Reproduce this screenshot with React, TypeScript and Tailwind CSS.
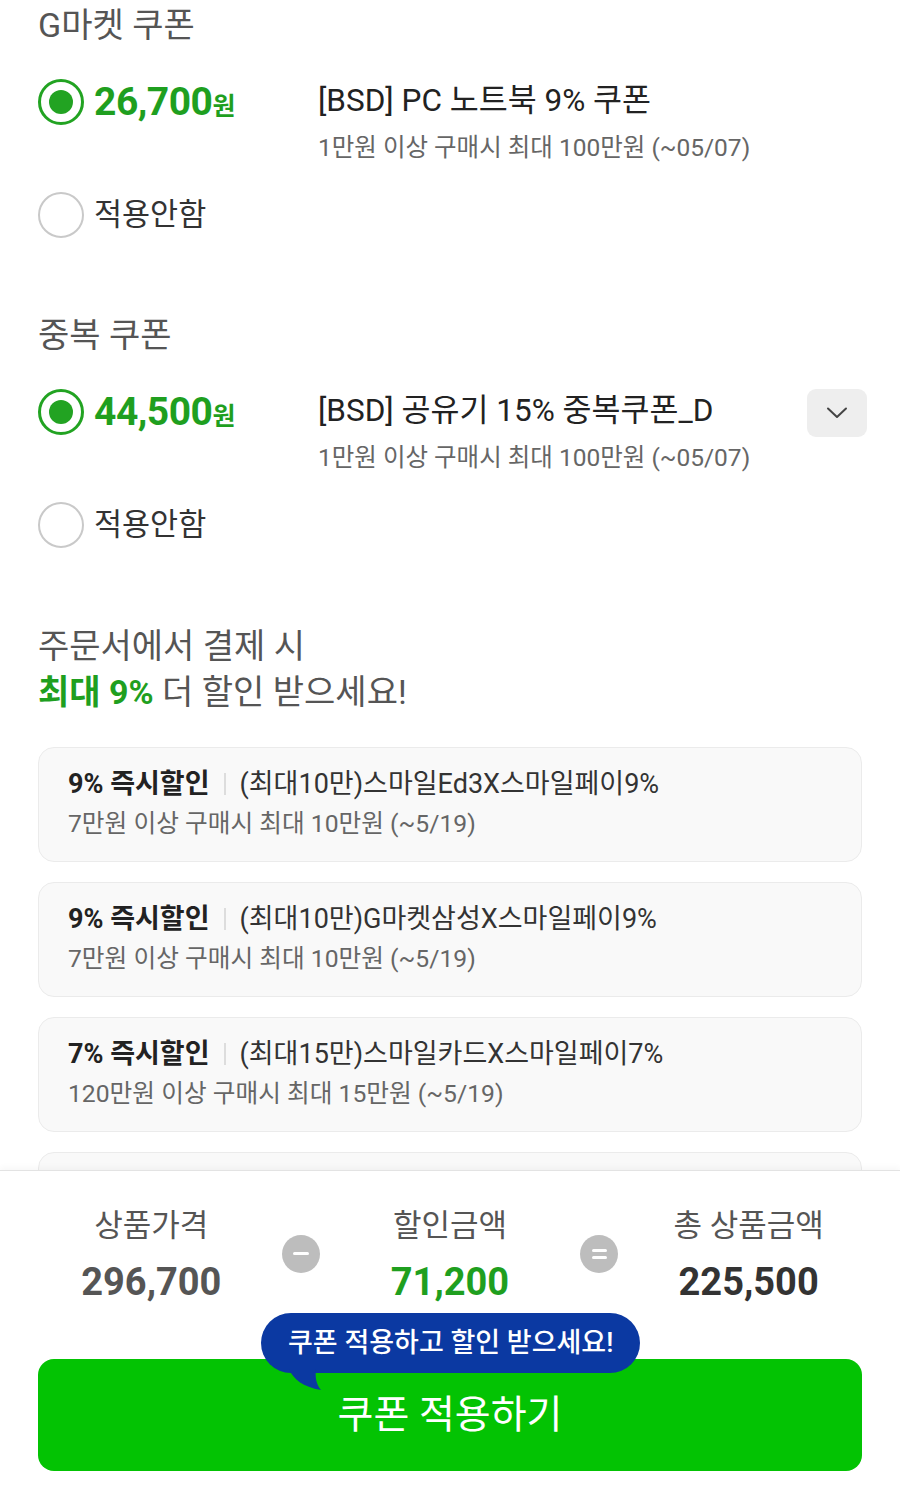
import React from 'react';

const font = { fontFamily: 'Roboto, "Noto Sans CJK KR", sans-serif' };

type Coupon = { amount: string; title: string; desc: string; dropdown?: boolean };
type Card = { rate: string; name: string; desc: string };

const cards: Card[] = [
  { rate: '9% 즉시할인', name: '(최대10만)스마일Ed3X스마일페이9%', desc: '7만원 이상 구매시 최대 10만원 (~5/19)' },
  { rate: '9% 즉시할인', name: '(최대10만)G마켓삼성X스마일페이9%', desc: '7만원 이상 구매시 최대 10만원 (~5/19)' },
  { rate: '7% 즉시할인', name: '(최대15만)스마일카드X스마일페이7%', desc: '120만원 이상 구매시 최대 15만원 (~5/19)' },
];

const RadioOn = () => (
  <span className="w-[46px] h-[46px] shrink-0 rounded-full border-[3px] border-[#22a322] flex items-center justify-center">
    <span className="w-[24px] h-[24px] rounded-full bg-[#22a322]" />
  </span>
);

const RadioOff = () => (
  <span className="w-[46px] h-[46px] shrink-0 rounded-full border-2 border-[#c9c9c9]" />
);

const CouponSection: React.FC<{ heading: string; coupon: Coupon; className?: string }> = ({ heading, coupon, className }) => (
  <div className={className}>
    <h2 className="text-[34px] leading-[40px] text-[#555]">{heading}</h2>

    {/* selected coupon */}
    <div className="flex items-start mt-[34px]">
      <div className="w-[280px] shrink-0 flex items-center gap-[10px] h-[46px]">
        <RadioOn />
        <span className="text-[39px] leading-none font-bold text-[#1f9f1f] tracking-[-0.5px]">
          {coupon.amount}
          <span className="text-[25px]">원</span>
        </span>
      </div>
      <div className="flex-1 flex items-start">
        <div className="flex-1 pt-[2px]">
          <p className="text-[31.5px] leading-[40px] text-[#222] whitespace-nowrap">{coupon.title}</p>
          <p className="mt-[11px] text-[24.5px] leading-[32px] text-[#666] whitespace-nowrap">{coupon.desc}</p>
        </div>
        {coupon.dropdown && (
          <button className="w-[60px] h-[48px] -mr-[5px] rounded-[9px] bg-[#eeeeee] flex items-center justify-center">
            <svg width="22" height="14" viewBox="0 0 22 14" fill="none">
              <path d="M2 2.5 L11 11 L20 2.5" stroke="#444" strokeWidth="2" strokeLinecap="round" strokeLinejoin="round" />
            </svg>
          </button>
        )}
      </div>
    </div>

    {/* none */}
    <div className="flex items-center gap-[10px] h-[46px] mt-[28px]">
      <RadioOff />
      <span className="text-[30.5px] leading-[40px] text-[#333]">적용안함</span>
    </div>
  </div>
);

export default function App() {
  return (
    <div className="w-[900px] h-[1489px] bg-white flex flex-col overflow-hidden" style={font}>
      {/* scrolling content */}
      <div className="h-[1170px] shrink-0 overflow-hidden px-[38px] pt-[5px]">
        <CouponSection
          heading="G마켓 쿠폰"
          coupon={{ amount: '26,700', title: '[BSD] PC 노트북 9% 쿠폰', desc: '1만원 이상 구매시 최대 100만원 (~05/07)' }}
        />
        <CouponSection
          className="mt-[77px]"
          heading="중복 쿠폰"
          coupon={{ amount: '44,500', title: '[BSD] 공유기 15% 중복쿠폰_D', desc: '1만원 이상 구매시 최대 100만원 (~05/07)', dropdown: true }}
        />

        <div className="mt-[75px] text-[34px] leading-[46px] text-[#555]">
          <p>주문서에서 결제 시</p>
          <p>
            <span className="font-bold text-[#1f9f1f]">최대 9%</span> 더 할인 받으세요!
          </p>
        </div>

        <div className="mt-[32px] flex flex-col gap-[20px]">
          {cards.map((c, i) => (
            <div key={i} className="h-[115px] shrink-0 rounded-[16px] border border-[#ebebeb] bg-[#f9f9f9] pl-[29px] pt-[18px]">
              <p className="text-[27px] leading-[36px] text-[#333] flex items-center whitespace-nowrap">
                <span className="font-bold text-[#222]">{c.rate}</span>
                <span className="mx-[14px] w-[2px] h-[22px] bg-[#dddddd]" />
                <span>{c.name}</span>
              </p>
              <p className="mt-[6px] text-[24.7px] leading-[32px] text-[#666] whitespace-nowrap">{c.desc}</p>
            </div>
          ))}
          {/* next card, scrolled out of view under the footer */}
          <div className="h-[115px] shrink-0 rounded-[16px] border border-[#ebebeb] bg-[#f9f9f9]" />
        </div>
      </div>

      {/* summary footer */}
      <div className="flex-1 border-t border-[#e3e3e3] shadow-[0_-3px_6px_rgba(0,0,0,0.03)] pt-[32px]">
        <div className="grid grid-cols-[1fr_38px_1fr_38px_1fr] items-center px-[21px]">
          <div className="flex flex-col items-center">
            <span className="text-[31px] leading-[46px] text-[#555] whitespace-nowrap">상품가격</span>
            <span className="mt-[11px] text-[38px] leading-[44px] font-bold text-[#555]">296,700</span>
          </div>
          <span className="w-[38px] h-[38px] rounded-full bg-[#bdbdbd] flex items-center justify-center">
            <span className="w-[16px] h-[3px] rounded bg-white" />
          </span>
          <div className="flex flex-col items-center">
            <span className="text-[31px] leading-[46px] text-[#555] whitespace-nowrap">할인금액</span>
            <span className="mt-[11px] text-[38px] leading-[44px] font-bold text-[#1f9f1f]">71,200</span>
          </div>
          <span className="w-[38px] h-[38px] rounded-full bg-[#bdbdbd] flex flex-col items-center justify-center gap-[4px]">
            <span className="w-[15px] h-[3px] rounded bg-white" />
            <span className="w-[15px] h-[3px] rounded bg-white" />
          </span>
          <div className="flex flex-col items-center">
            <span className="text-[31px] leading-[46px] text-[#555] whitespace-nowrap">총 상품금액</span>
            <span className="mt-[11px] text-[38px] leading-[44px] font-bold text-[#333]">225,500</span>
          </div>
        </div>

        <div className="relative mx-[38px] mt-[55px]">
          <button className="w-full h-[112px] rounded-[16px] bg-[#03c303] text-white text-[39px] leading-[56px] flex items-center justify-center">
            쿠폰 적용하기
          </button>

          {/* tooltip bubble */}
          <div className="absolute left-[223px] -top-[46px]">
            <div className="relative h-[60px] px-[27px] rounded-full bg-[#0b39a2] flex items-center text-white text-[27px] leading-[40px] font-medium whitespace-nowrap">
              쿠폰 적용하고 할인 받으세요!
            </div>
            <svg className="absolute left-[28px] top-[56px]" width="34" height="22" viewBox="0 0 34 22">
              <path d="M0 0 C4 10 14 18 32 21 C27 15 26 8 27 0 Z" fill="#0b39a2" />
            </svg>
          </div>
        </div>
      </div>
    </div>
  );
}
